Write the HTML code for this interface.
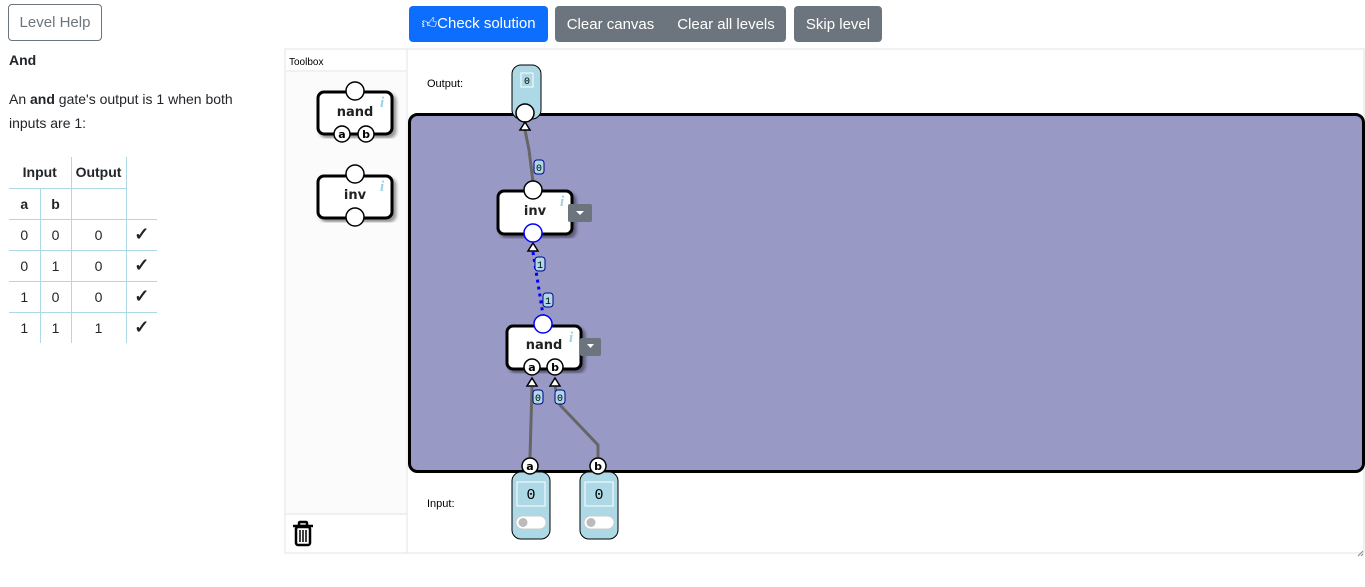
<!DOCTYPE html>
<html><head><style>
*{box-sizing:border-box;margin:0;padding:0}
body{width:1365px;height:587px;position:relative;background:#fff;font-family:"Liberation Sans",sans-serif;color:#212529;overflow:hidden}
.btn{position:absolute;font-size:15px;border-radius:4px;display:flex;align-items:center;justify-content:center;color:#fff}
.t{position:absolute;font-size:14px}
table{position:absolute;left:9px;top:157px;border-collapse:collapse;font-size:14px}
td{width:31px;height:31px;text-align:center;border:1px solid #add8e6}
.ck{font-size:18px;font-weight:bold}
</style></head><body>
<div class="btn" style="left:8px;top:4px;width:94px;height:37px;border:1px solid #6c757d;color:#6c757d">Level Help</div>
<div class="btn" style="left:409px;top:6px;width:139px;height:36px;background:#0d6efd">&#128077;&#xFE0E;Check solution</div>
<div class="btn" style="left:555px;top:6px;width:111px;height:36px;background:#6c757d;border-radius:4px 0 0 4px">Clear canvas</div>
<div class="btn" style="left:666px;top:6px;width:120px;height:36px;background:#6c757d;border-radius:0 4px 4px 0">Clear all levels</div>
<div class="btn" style="left:794px;top:6px;width:88px;height:36px;background:#6c757d">Skip level</div>
<div class="t" style="left:9px;top:52px;font-weight:bold">And</div>
<div class="t" style="left:9px;top:87px;line-height:24px;width:260px">An <b>and</b> gate's output is 1 when both inputs are 1:</div>
<table>
<tr><td colspan="2" style="border-top:none;border-left:none;font-weight:bold">Input</td><td style="width:55px;border-top:none;font-weight:bold">Output</td><td style="border:none;border-left:1px solid #add8e6"></td></tr>
<tr style="font-weight:bold"><td style="border-left:none">a</td><td>b</td><td></td><td style="border-top:none;border-right:none"></td></tr>
<tr><td style="border-left:none">0</td><td>0</td><td>0</td><td class="ck" style="border-right:none">✓</td></tr>
<tr><td style="border-left:none">0</td><td>1</td><td>0</td><td class="ck" style="border-right:none">✓</td></tr>
<tr><td style="border-left:none">1</td><td>0</td><td>0</td><td class="ck" style="border-right:none">✓</td></tr>
<tr><td style="border-left:none;border-bottom:none">1</td><td style="border-bottom:none">1</td><td style="border-bottom:none">1</td><td class="ck" style="border-right:none;border-bottom:none">✓</td></tr>
</table>
<svg style="position:absolute;left:0;top:0" width="1365" height="587" font-family="Liberation Sans, sans-serif">
<defs><filter id="sh"><feDropShadow dx="3" dy="3" stdDeviation="1.5" flood-opacity="0.4"/></filter></defs>
<rect x="285" y="49" width="1079" height="504" fill="none" stroke="#e3e3e3"/>
<line x1="407" y1="49" x2="407" y2="553" stroke="#e3e3e3"/>
<rect x="286" y="50" width="120" height="20" fill="#fff"/>
<line x1="286" y1="71" x2="406" y2="71" stroke="#e3e3e3"/>
<rect x="286" y="72" width="120" height="442" fill="#fbfbfb"/>
<line x1="285" y1="514" x2="407" y2="514" stroke="#e3e3e3"/>
<text x="289" y="65" font-size="10">Toolbox</text>
<g stroke="#000" stroke-width="2.5" fill="none">
<rect x="296" y="527" width="14" height="18" rx="2"/><line x1="293" y1="526" x2="313" y2="526"/><rect x="299" y="522" width="8" height="4" rx="1"/>
<line x1="300" y1="530" x2="300" y2="542" stroke-width="1.5"/><line x1="303" y1="530" x2="303" y2="542" stroke-width="1.5"/><line x1="306" y1="530" x2="306" y2="542" stroke-width="1.5"/></g>
<text x="427" y="87" font-size="11">Output:</text>
<text x="427" y="507" font-size="11">Input:</text>
<rect x="409.5" y="114.5" width="954" height="357" rx="8" fill="#9999c6" stroke="#000" stroke-width="3"/>
<rect x="512" y="65" width="29" height="54" rx="9" fill="#add8e6" stroke="#000"/>
<rect x="521" y="73" width="12" height="14" fill="none" stroke="#fff"/>
<text x="527" y="84" font-size="10" text-anchor="middle" font-family="Liberation Mono">0</text>
<circle cx="525" cy="113" r="9" fill="#fff" stroke="#000" stroke-width="1.5"/>
<polyline points="525,130 529,150 533,182" fill="none" stroke="#666" stroke-width="3"/>
<line x1="533" y1="252" x2="543" y2="315" stroke="#00f" stroke-width="3" stroke-dasharray="3,4"/>
<line x1="532" y1="387" x2="530" y2="457" stroke="#666" stroke-width="3"/>
<polyline points="555,387 560,405 598,445 598,457" fill="none" stroke="#666" stroke-width="3"/>
<g fill="#fff" stroke="#000" stroke-width="1.5">
<polygon points="525,122 520,130 530,130"/><polygon points="533,243 528,251 538,251"/>
<polygon points="532,378 527,386 537,386"/><polygon points="555,378 550,386 560,386"/></g>
<g font-size="10" font-family="Liberation Mono" text-anchor="middle">
<rect x="534" y="160" width="10" height="14" rx="3" fill="#add8e6" stroke="#00008b"/><text x="539" y="171">0</text>
<rect x="535" y="257" width="10" height="14" rx="3" fill="#add8e6" stroke="#00008b"/><text x="540" y="268">1</text>
<rect x="543" y="293" width="10" height="14" rx="3" fill="#add8e6" stroke="#00008b"/><text x="548" y="304">1</text>
<rect x="533" y="390" width="10" height="14" rx="3" fill="#add8e6" stroke="#00008b"/><text x="538" y="401">0</text>
<rect x="555" y="390" width="10" height="14" rx="3" fill="#add8e6" stroke="#00008b"/><text x="560" y="401">0</text>
</g>
<g font-size="13" text-anchor="middle" font-family="DejaVu Sans, sans-serif" font-weight="bold" fill="#222">
<rect x="318" y="92" width="74" height="42" rx="6" fill="#fff" stroke="#000" stroke-width="3" filter="url(#sh)"/>
<text x="355" y="116">nand</text>
<rect x="318" y="176" width="74" height="42" rx="6" fill="#fff" stroke="#000" stroke-width="3" filter="url(#sh)"/>
<text x="355" y="199">inv</text>
<rect x="498" y="191" width="74" height="43" rx="6" fill="#fff" stroke="#000" stroke-width="3" filter="url(#sh)"/>
<text x="535" y="215">inv</text>
<rect x="507" y="326" width="74" height="43" rx="6" fill="#fff" stroke="#000" stroke-width="3" filter="url(#sh)"/>
<text x="544" y="349">nand</text>
</g>
<g fill="#9cd0e6" font-size="15" font-weight="bold" font-style="italic" font-family="Liberation Serif">
<text x="380" y="107">i</text><text x="380" y="191">i</text><text x="560" y="206">i</text><text x="569" y="342">i</text></g>
<rect x="568" y="204" width="24" height="18" rx="2" fill="#6c757d"/><polygon points="576,211 584,211 580,215" fill="#fff"/>
<rect x="580" y="338" width="21" height="18" rx="2" fill="#6c757d"/><polygon points="587,344 594,344 590.5,348" fill="#fff"/>
<g fill="#fff" stroke="#000" stroke-width="1.5">
<circle cx="355" cy="91" r="9"/><circle cx="342" cy="134" r="8"/><circle cx="366" cy="134" r="8"/>
<circle cx="355" cy="174" r="9"/><circle cx="355" cy="217" r="9"/>
<circle cx="533" cy="190" r="9"/><circle cx="533" cy="233" r="9" stroke="#00f"/>
<circle cx="543" cy="324" r="9" stroke="#00f"/><circle cx="532" cy="367" r="8"/><circle cx="555" cy="367" r="8"/>
</g>
<g font-size="11" font-weight="bold" text-anchor="middle" font-family="DejaVu Sans, sans-serif">
<text x="342" y="138">a</text><text x="366" y="138">b</text><text x="532" y="371">a</text><text x="555" y="371">b</text></g>
<g>
<rect x="512" y="472" width="38" height="67" rx="9" fill="#add8e6" stroke="#000"/>
<rect x="517" y="482" width="28" height="24" fill="none" stroke="#fff"/>
<text x="531" y="499" font-size="15" text-anchor="middle" font-family="Liberation Mono">0</text>
<rect x="516" y="516" width="30" height="13" rx="6.5" fill="#fff" stroke="#ccc"/><circle cx="523" cy="522.5" r="4.5" fill="#bbb"/>
<rect x="580" y="472" width="38" height="67" rx="9" fill="#add8e6" stroke="#000"/>
<rect x="585" y="482" width="28" height="24" fill="none" stroke="#fff"/>
<text x="599" y="499" font-size="15" text-anchor="middle" font-family="Liberation Mono">0</text>
<rect x="584" y="516" width="30" height="13" rx="6.5" fill="#fff" stroke="#ccc"/><circle cx="591" cy="522.5" r="4.5" fill="#bbb"/>
<circle cx="530" cy="466" r="8" fill="#fff" stroke="#000" stroke-width="1.5"/>
<circle cx="598" cy="466" r="8" fill="#fff" stroke="#000" stroke-width="1.5"/>
<text x="530" y="470" font-size="11" font-weight="bold" text-anchor="middle" font-family="DejaVu Sans, sans-serif">a</text>
<text x="598" y="470" font-size="11" font-weight="bold" text-anchor="middle" font-family="DejaVu Sans, sans-serif">b</text>
</g>
<path d="M1358 556 L1363 551 M1361 556 L1363 554" stroke="#888"/>
</svg>
</body></html>
